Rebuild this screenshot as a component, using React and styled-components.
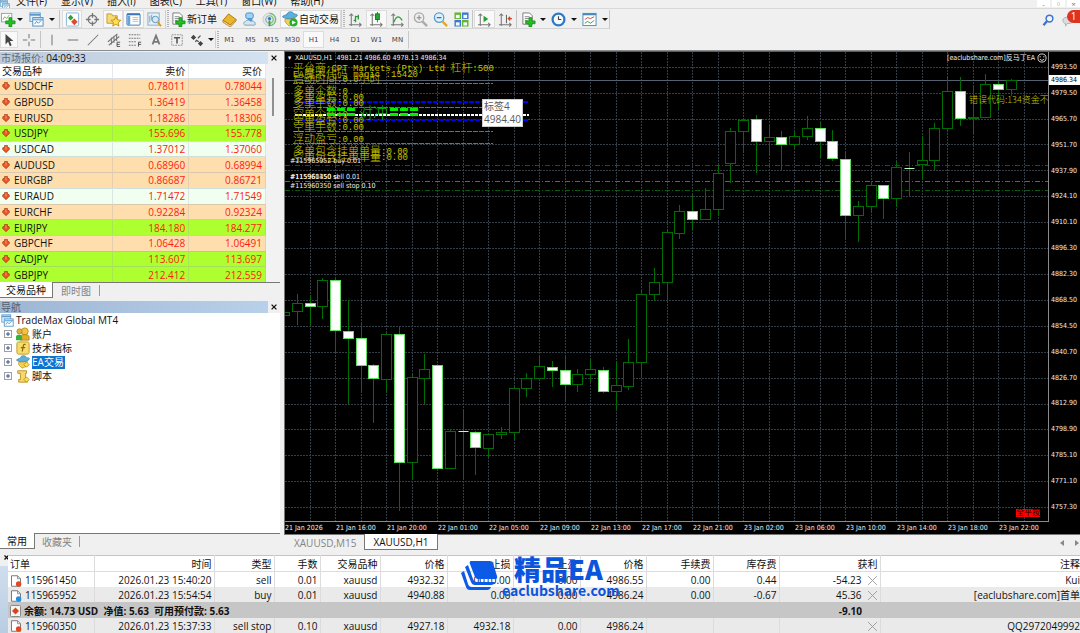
import React from 'react'
import styled, { createGlobalStyle } from 'styled-components'

const GlobalStyle = createGlobalStyle`
  *{
    box-sizing: border-box;
  }
  body{
    margin: 0;
    background: #f0f0f0;
    color: #111;
    font-family: 'Open Sans', 'Noto Sans CJK SC', sans-serif;
    font-size: 10px;
    line-height: 14px;
  }
  button{
    font: inherit;
    color: inherit;
    border: 0;
    padding: 0;
    margin: 0;
    background: none;
  }
  svg{
    display: block;
  }
`

const chartFont = `'DejaVu Sans Condensed', 'DejaVu Sans', 'Noto Sans CJK SC', sans-serif`

const Page = styled.div`
  display: flex;
  flex-direction: column;
  height: 100vh;
  overflow: hidden;
`

const MenuBar = styled.nav`
  display: flex;
  align-items: flex-end;
  gap: 14px;
  height: 9px;
  flex: none;
  overflow: hidden;
  border-bottom: 1px solid #d9d9d9;
  white-space: nowrap;
`

const MenuIcon = styled.div`
  width: 11px;
  height: 8px;
  margin-right: -9px;
  overflow: hidden;
`

const WindowButtons = styled.div`
  display: flex;
  gap: 2px;
  margin-left: auto;
  margin-bottom: 1px;
`

const WindowButton = styled.button`
  width: 13px;
  height: 7px;
  background: #fff;
  color: #777;
  font-size: 8px;
  line-height: 3px;
`

const ToolBar = styled.div`
  display: flex;
  flex: none;
  height: ${props => props.$h}px;
  padding: 1px 0;
`

const ToolGroup = styled.div`
  display: flex;
  border-right: 1px solid #c8c8c8;
  border-bottom: 1px solid ${props => props.$line ? '#d4d4d4' : 'transparent'};
`

const Tool = styled.button`
  display: flex;
  align-items: center;
  justify-content: center;
  gap: 1px;
  flex: none;
  width: ${props => props.$w || 21}px;
  white-space: nowrap;
  background: ${props => props.$on ? '#f9f9f9' : 'none'};
  box-shadow: ${props => props.$on ? 'inset 0 0 0 1px #dcdcdc' : 'none'};
`

const Period = styled(Tool)`
  font-family: 'DejaVu Sans', sans-serif;
  font-size: 7px;
  color: #444;
`

const Sep = styled.div`
  flex: none;
  width: ${props => props.$w || 3}px;
  background: linear-gradient(#c4c4c4, #c4c4c4) center / 1px 100% no-repeat;
`

const Grip = styled.div`
  flex: none;
  width: 4px;
  border-left: 1px solid #d0d0d0;
  background: repeating-linear-gradient(#b4b4b4 0 1px, #f0f0f0 1px 2px) center / 2px 100% no-repeat;
`

const Caret = styled.span`
  border: 3px solid transparent;
  border-top-color: #111;
  border-bottom: 0;
`

const ToolRight = styled.div`
  display: flex;
  align-items: center;
  gap: 8px;
  margin-left: auto;
`

const Badge = styled.span`
  position: absolute;
  top: -3px;
  right: 0;
  width: 13px;
  height: 13px;
  border-radius: 7px 0 0 7px;
  background: #de3320;
  color: #fff;
  line-height: 13px;
  text-align: center;
`

const Notice = styled.button`
  position: relative;
  width: 18px;
  height: 14px;
`

const Main = styled.div`
  display: flex;
  flex: 1;
  min-height: 0;
  border-top: 1px solid #8c8c8c;
`

const Side = styled.aside`
  display: flex;
  flex-direction: column;
  flex: none;
  width: 284px;
  padding: 1px 4px 0 0;
`

const Title = styled.header`
  display: flex;
  flex: none;
  height: 12px;
  line-height: 12px;
  color: ${props => props.$dim ? '#53606e' : '#111'};
  span{
    flex: 1;
    padding-left: 1px;
    background: ${props => props.$dim
      ? 'linear-gradient(90deg, #9db6d3, #b9d0ea)'
      : 'linear-gradient(90deg, #bdcbdc, #d3e1f0)'};
  }
  b{
    font-weight: 400;
    color: #5d6b7a;
  }
`

const Close = styled.button`
  display: flex;
  align-items: center;
  justify-content: center;
  width: 12px;
`

const QuoteBox = styled.div`
  display: flex;
  background: #fff;
`

const Quotes = styled.table`
  flex: 1;
  height: 218px;
  border-collapse: collapse;
  table-layout: fixed;
  line-height: 14px;
  th, td{
    padding: 0 3px 0 0;
    font-weight: 400;
    text-align: right;
    border-right: 1px solid rgba(150, 160, 180, 0.25);
  }
  th:first-child, td:first-child{
    text-align: left;
    padding-left: 2px;
  }
  td{
    color: #ff1a10;
    border-top: 1px solid rgba(150, 160, 180, 0.35);
  }
  td:first-child{
    color: #111;
  }
`

const tones = { sand: '#ffdead', lime: '#adff2f', mint: '#f0fff0' }

const QuoteRow = styled.tr`
  background: ${props => tones[props.$tone]};
`

const Symbol = styled.span`
  display: flex;
  align-items: center;
  gap: 4px;
`

const ScrollTrack = styled.div`
  width: 14px;
  padding: 14px 0 0 6px;
  background: #f2f2f2;
`

const ScrollThumb = styled.div`
  width: 2px;
  height: 38px;
  background: #909090;
`

const Tabs = styled.div`
  display: flex;
  flex: none;
  height: ${props => props.$h}px;
  border-top: 1px solid #777;
  padding-left: ${props => props.$inset || 0}px;
`

const Tab = styled.button`
  height: 16px;
  padding: 0 ${props => props.$pad || 8}px;
  line-height: 14px;
  color: ${props => props.$on ? '#111' : '#848484'};
  background: ${props => props.$on ? '#fff' : 'none'};
  border: solid #777;
  border-width: ${props => props.$on ? '0 1px 1px 0' : '0'};
  margin-top: ${props => props.$on ? '-1px' : '0'};
  border-left-width: ${props => props.$on && props.$boxed ? '1px' : '0'};
`

const TabSep = styled.div`
  width: 1px;
  height: 11px;
  margin-top: 2px;
  background: #999;
`

const TabArrows = styled.div`
  display: flex;
  gap: 11px;
  align-items: center;
  margin-left: auto;
  padding-right: 1px;
`

const Tree = styled.ul`
  display: grid;
  grid-template-rows: repeat(5, 1fr);
  height: 69px;
  margin: 0;
  padding: 1px 0 0;
  list-style: none;
`

const TreeBox = styled.div`
  flex: 1;
  background: #fff;
`

const Leaf = styled.li`
  display: flex;
  align-items: center;
  gap: 2px;
  padding-left: ${props => props.$root ? 1 : 4}px;
`

const Expand = styled.button`
  display: flex;
  width: 8px;
  margin-right: 2px;
`

const LeafName = styled.span`
  line-height: 13px;
  padding-right: 1px;
  color: ${props => props.$on ? '#fff' : '#111'};
  background: ${props => props.$on ? '#0c74d0' : 'none'};
`

const ChartColumn = styled.section`
  display: flex;
  flex-direction: column;
  flex: 1;
  min-width: 0;
`

const ChartFrame = styled.div`
  display: grid;
  grid-template: minmax(0, 1fr) 12px / minmax(0, 1fr) 31px;
  flex: 1;
  min-height: 0;
  overflow: hidden;
  border-top: 1px solid #5c5c5c;
  border-left: 1px solid #777;
  background: #000;
  color: #f0f0f0;
  font-family: ${chartFont};
  font-size: 7px;
  line-height: 10px;
`

const Plot = styled.div`
  position: relative;
  overflow: hidden;
  border: solid #8a8a8a;
  border-width: 0 1px 1px 0;
  svg.plot{
    width: 100%;
    height: 100%;
  }
`

const PriceAxis = styled.div`
  position: relative;
  display: flex;
  flex-direction: column;
  justify-content: space-between;
  padding: 10px 0 10px 2px;
`

const PriceNow = styled.div`
  position: absolute;
  top: 23px;
  left: 0;
  right: 0;
  padding-left: 2px;
  background: #fff;
  color: #000;
`

const TimeAxis = styled.div`
  display: flex;
  grid-column: 1 / 3;
  white-space: nowrap;
  line-height: 12px;
  span{
    flex: 0 0 51px;
  }
`

// text an expert advisor writes straight onto the chart
const Note = styled.div`
  position: absolute;
  left: ${props => props.$x}px;
  top: ${props => props.$y - 7}px;
  white-space: pre;
  line-height: 14px;
  font-size: ${props => props.$size || 11}px;
  font-family: 'Noto Sans CJK SC', sans-serif;
  font-weight: 300;
  color: ${props => props.$color || '#c4c400'};
  i{
    font: 9px/12px 'Liberation Mono', monospace;
    vertical-align: 1px;
  }
`

const ChartLabel = styled.div`
  position: absolute;
  left: ${props => props.$x}px;
  top: ${props => props.$y - 5}px;
  white-space: pre;
`

const ChartName = styled.div`
  position: absolute;
  top: 0;
  right: 1px;
  display: flex;
  align-items: center;
  gap: 2px;
  line-height: 12px;
`

const Tip = styled.div`
  position: absolute;
  left: 197px;
  top: 47px;
  padding: 0 1px;
  border: 1px solid #ccc;
  background: #fff;
  color: #5a5a5a;
  font-family: 'Open Sans', 'Noto Sans CJK SC', sans-serif;
  font-size: 10px;
  line-height: 13px;
`

const CloseAll = styled.button`
  position: absolute;
  right: 8px;
  bottom: 4px;
  width: 24px;
  height: 8px;
  overflow: hidden;
  background: #f00;
  color: #200;
  font-size: 8px;
  line-height: 8px;
  white-space: nowrap;
`

const Terminal = styled.section`
  position: relative;
  display: flex;
  flex: none;
  height: 82px;
  padding-top: 4px;
`

const Gutter = styled.div`
  flex: none;
  width: 8px;
  background: linear-gradient(#f0f0f0 11px, #cfdeee 11px, #b9cde2);
`

const Orders = styled.table`
  flex: 1;
  width: calc(100% - 8px);
  height: 78px;
  table-layout: fixed;
  border-collapse: collapse;
  border-top: 1px solid #c4c4c4;
  background: #fff;
  line-height: 13px;
  white-space: nowrap;
  th, td{
    padding: 2px 2px 0 0;
    font-weight: 400;
    text-align: right;
    border-right: 1px solid #dcdcdc;
  }
  th:first-child, td:first-child{
    text-align: left;
    padding-left: 2px;
  }
  th:last-child, td:last-child{
    padding-right: 0;
    border-right: 0;
  }
  thead tr{
    border-bottom: 1px solid #dcdcdc;
  }
`

const OrderRow = styled.tr`
  background: ${props => props.$shade ? '#eaeaea' : '#fff'};
`

const BalanceRow = styled.tr`
  background: #c6c6c6;
  && td{
    border: 0;
    font-weight: 700;
  }
  && td:nth-child(2){
    padding-right: 18px;
  }
`

const Cell = styled.span`
  display: flex;
  align-items: center;
  justify-content: ${props => props.$end ? 'flex-end' : 'flex-start'};
  gap: ${props => props.$end ? 5 : 3}px;
`

const Watermark = styled.div`
  position: absolute;
  left: 461px;
  top: 4px;
  display: flex;
  align-items: center;
  color: #0b55dd;
  font-family: 'Noto Sans CJK SC', sans-serif;
  font-weight: 700;
  div{
    margin-left: 4px;
  }
  strong{
    display: block;
    margin-left: 12px;
    font-size: 27px;
    line-height: 28px;
  }
  em{
    display: block;
    font-style: normal;
    font-size: 14px;
    line-height: 14px;
  }
`

const Icon = ({ size = 15, children }) => (
  <svg width={size} height={size} viewBox='0 0 16 16' fill='none' aria-hidden='true'>{children}</svg>
)

const PlusMark = () => <path d='M8.5 6h3v3.5H15v3h-3.500V16h-3v-3.500H5v-3h3.500z' fill='#1fc01f' stroke='#0b8a12' strokeWidth='.8' />

const NewChartIcon = () => (
  <Icon>
    <rect x='.5' y='1.500' width='11' height='9' fill='#fff' stroke='#86a4ba' />
    <path d='M2 8l2-3 2 2 3-4' stroke='#7faa6a' />
    <PlusMark />
  </Icon>
)

const WindowsIcon = ({ size }) => (
  <Icon size={size}>
    <rect x='1' y='1' width='11' height='9' fill='#e6f3fc' stroke='#5f9bc9' />
    <path d='M1 3h11' stroke='#5f9bc9' strokeWidth='2' />
    <rect x='4' y='6' width='11' height='9' fill='#fff' stroke='#4b8cc0' />
    <path d='M4 8h11' stroke='#6fb2e0' strokeWidth='2' />
    <path d='M6 13l2-3 2 2 3-3' stroke='#4b8cc0' />
  </Icon>
)

const MarketIcon = () => (
  <Icon>
    <rect x='1.500' y='1' width='13' height='14' rx='1' fill='#fff' stroke='#8bb3d8' />
    <path d='M6 3l3 3-3 3-3-3z' fill='#2fa33a' />
    <path d='M10 7l3.500 3.500L10 14l-3.500-3.500z' fill='#e04a2c' />
  </Icon>
)

const TargetIcon = () => (
  <Icon>
    <circle cx='8' cy='8' r='4.500' stroke='#777' strokeWidth='1.400' />
    <path d='M8 1v5M8 10v5M1 8h5M10 8h5' stroke='#777' strokeWidth='1.400' />
  </Icon>
)

const FolderStarIcon = () => (
  <Icon>
    <path d='M1 2h5l1 2h5v8H1z' fill='#f7d978' stroke='#c79a2c' />
    <path d='M10.500 5l1.600 3.400 3.700.4-2.700 2.500.7 3.700-3.300-1.900L7.200 15l.7-3.700-2.700-2.500 3.700-.4z' fill='#ffe04d' stroke='#c58e15' />
  </Icon>
)

const DataIcon = () => (
  <Icon>
    <rect x='1' y='2' width='14' height='12' rx='1' fill='#fff' stroke='#3c78b8' />
    <path d='M1 2.500h14' stroke='#3c78b8' strokeWidth='2' />
    <path d='M3 4v10' stroke='#69a4d9' strokeWidth='3' />
    <path d='M7 6h6M7 8h6M7 10h6' stroke='#d9b98a' />
  </Icon>
)

const TesterIcon = () => (
  <Icon>
    <rect x='1' y='1' width='12' height='13' fill='#e8f1f8' stroke='#88a9c4' />
    <path d='M3 4v7M5 3v6M7 5v6' stroke='#71a0c4' />
    <circle cx='9' cy='8' r='3.500' fill='#d4e8f5' stroke='#6695b9' />
    <path d='M11.500 11l3.500 4' stroke='#d69b25' strokeWidth='2' />
  </Icon>
)

const OrderIcon = () => (
  <Icon>
    <path d='M2 1h7l3 3v9H2z' fill='#fff' stroke='#777' />
    <path d='M4 5h5M4 7h5M4 9h3' stroke='#888' />
    <PlusMark />
  </Icon>
)

const BookIcon = () => (
  <Icon>
    <path d='M1 9l6-7 8 6-6 6z' fill='#eab62b' stroke='#a97411' />
    <path d='M1 9l8 5 6-6v1.500L9 16l-8-5z' fill='#fbe7a2' stroke='#a97411' strokeWidth='.8' />
  </Icon>
)

const CommunityIcon = () => (
  <Icon>
    <rect x='4' y='1' width='8' height='6' rx='2' fill='#9ed3f5' stroke='#3d8fc9' />
    <path d='M6 7v3h5V7' fill='#4a9ad4' />
    <path d='M3 14c-2-1-1-4 1-4 1-2 4-2 5 0 2-1 5 0 5 2 1 1 0 2-1 2z' fill='#d5e6f2' stroke='#7b9fb9' />
  </Icon>
)

const SignalIcon = () => (
  <Icon>
    <circle cx='8' cy='8' r='7' fill='#e3e8e4' stroke='#b9c6c2' strokeWidth='.8' />
    <path d='M8 4a4 4 0 010 8M8 1.500a6.500 6.500 0 010 13' stroke='#6cbd76' strokeWidth='1.300' />
    <path d='M8 4a4 4 0 000 8' stroke='#8fabd0' strokeWidth='1.300' />
    <circle cx='8' cy='7' r='1.800' fill='#3577bb' />
    <path d='M8 9v6' stroke='#3f9c4a' strokeWidth='2' />
  </Icon>
)

const RobotIcon = ({ play, size = 16 }) => (
  <Icon size={size}>
    <path d='M3 8l10-1-1 6-5 2-4-4z' fill='#f3cf54' stroke='#ba8d1c' strokeWidth='.7' />
    <path d='M.5 6C2 3 5 5 5 3c1-3 6-3 7 0 3 0 4 1 3 2-3 3-9 4-14.500 1z' fill='#5eb0dc' stroke='#2d7ba8' strokeWidth='.7' />
    {play
      ? <><circle cx='11.500' cy='11.500' r='4' fill='#22b02c' /><path d='M10 9.500l4 2-4 2z' fill='#fff' /></>
      : <path d='M12 8l3 3-3 3-3-3z' fill='#ffe052' stroke='#b98c14' />}
  </Icon>
)

const Axes = ({ children }) => (
  <Icon>
    <path d='M3.500 15V2M1.500 4l2-2 2 2M1 13.500h13M12 11.500l2 2-2 2' stroke='#777' strokeWidth='1.100' />
    {children}
  </Icon>
)

const LensIcon = ({ plus, gray }) => (
  <Icon>
    <circle cx='6.500' cy='6' r='5' fill={gray ? '#eee' : '#dff1fc'} stroke={gray ? '#aaa' : '#57a0cf'} strokeWidth='1.400' />
    <path d={plus ? 'M4 6h5M6.500 3.500v5' : 'M4 6h5'} stroke={gray ? '#999' : '#2c79b4'} strokeWidth='1.400' />
    <path d='M10 10l5 5' stroke={gray ? '#aaa' : '#e0a92b'} strokeWidth='2.500' />
  </Icon>
)

const TileIcon = () => (
  <Icon>
    {[[0, 0, '#67b32e'], [8, 0, '#3c78d0'], [0, 8, '#3c78d0'], [8, 8, '#67b32e']].map(([x, y, c]) => (
      <g key={x + '-' + y}>
        <rect x={x + 0.5} y={y + 0.5} width='7' height='7' fill={c} />
        <rect x={x + 2} y={y + 3} width='4' height='3.500' fill='#f4f8ff' />
      </g>
    ))}
  </Icon>
)

const ClockIcon = () => (
  <Icon>
    <circle cx='8' cy='8' r='6.300' fill='#f5faff' stroke='#2f78c4' strokeWidth='2.400' />
    <path d='M8 4.500V8h3' stroke='#444' strokeWidth='1.200' />
  </Icon>
)

const TemplateIcon = () => (
  <Icon>
    <rect x='1' y='1.500' width='14' height='13' fill='#fff' stroke='#4889bf' />
    <path d='M1 2.500h14' stroke='#4889bf' strokeWidth='2' />
    <path d='M3 8l3-2 3 1 4-2' stroke='#cc4a35' />
    <path d='M3 12l3-2 3 2 4-3' stroke='#35a047' />
  </Icon>
)

const Line = ({ d, w = 1.2, children }) => (
  <Icon size={14}><path d={d} stroke='#777' strokeWidth={w} />{children}</Icon>
)

const Drop = () => <Tool $w={8} aria-label='more'><Caret /></Tool>

const ArrowIcon = () => (
  <svg width='8' height='8' viewBox='0 0 8 8' aria-hidden='true'>
    <path d='M4 7.700L.4 4.300 1 2.500h1.500v-2h3v2H7l.6 1.800z' fill='#ea5526' stroke='#9c300f' strokeWidth='.6' />
    <path d='M3.500 1.500h1v3h-1z' fill='#ff9a70' />
  </svg>
)

const DocIcon = ({ dot }) => (
  <Icon size={12}>
    <path d='M2 1h8l4 4v10H2z' fill='#fff' stroke='#777' strokeWidth='1.300' />
    <path d='M10 1v4h4' stroke='#777' />
    <circle cx='11.500' cy='12' r='3.600' fill={dot} />
  </Icon>
)

const CrossIcon = ({ size = 6, color = '#111', width = 1.3 }) => (
  <svg width={size} height={size} viewBox='0 0 10 10' aria-hidden='true'>
    <path d='M1 1l8 8M9 1L1 9' stroke={color} strokeWidth={width * 10 / size} />
  </svg>
)

const menus = ['文件(F)', '显示(V)', '插入(I)', '图表(C)', '工具(T)', '窗口(W)', '帮助(H)']
const periods = ['M1', 'M5', 'M15', 'M30', 'H1', 'H4', 'D1', 'W1', 'MN']

const quotes = [
  ['USDCHF', '0.78011', '0.78044', 'sand'],
  ['GBPUSD', '1.36419', '1.36458', 'sand'],
  ['EURUSD', '1.18286', '1.18306', 'sand'],
  ['USDJPY', '155.696', '155.778', 'lime'],
  ['USDCAD', '1.37012', '1.37060', 'mint'],
  ['AUDUSD', '0.68960', '0.68994', 'sand'],
  ['EURGBP', '0.86687', '0.86721', 'sand'],
  ['EURAUD', '1.71472', '1.71549', 'mint'],
  ['EURCHF', '0.92284', '0.92324', 'sand'],
  ['EURJPY', '184.180', '184.277', 'lime'],
  ['GBPCHF', '1.06428', '1.06491', 'sand'],
  ['CADJPY', '113.607', '113.697', 'lime'],
  ['GBPJPY', '212.412', '212.559', 'lime']
]

const prices = ['4993.50', '4979.50', '4965.70', '4951.70', '4937.90', '4924.10', '4910.10', '4896.30', '4882.30',
  '4868.50', '4854.50', '4840.70', '4826.70', '4812.90', '4798.90', '4785.10', '4771.10', '4757.30']

const times = ['21 Jan 2026', '21 Jan 16:00', '21 Jan 20:00', '22 Jan 01:00', '22 Jan 05:00', '22 Jan 09:00',
  '22 Jan 13:00', '22 Jan 17:00', '22 Jan 21:00', '23 Jan 02:00', '23 Jan 06:00', '23 Jan 10:00',
  '23 Jan 14:00', '23 Jan 18:00', '23 Jan 22:00']

const rows = [67, 93, 119, 144, 170, 196, 222, 248, 274, 300, 326, 352, 378, 404, 429, 455, 481, 507]

// high, body top, body bottom, low, falling
const candles = [
  [303, 312, 315, 317, 0], [294, 303, 311, 325, 0], [295, 303, 306, 325, 1], [278, 280, 306, 319, 0],
  [277, 280, 330, 353, 1], [300, 331, 338, 404, 1], [324, 338, 365, 391, 1], [364, 365, 378, 423, 1],
  [333, 334, 379, 391, 0], [327, 334, 462, 511, 1], [375, 377, 462, 480, 0], [354, 369, 378, 404, 0],
  [364, 365, 468, 469, 1], [430, 431, 468, 469, 0], [410, 431, 431, 480, 1], [431, 432, 447, 475, 1],
  [433, 434, 448, 457, 0], [427, 432, 434, 439, 0], [387, 388, 432, 440, 0], [373, 378, 388, 397, 0],
  [356, 366, 378, 379, 0], [361, 367, 370, 387, 1], [357, 370, 384, 401, 1], [369, 374, 384, 392, 0],
  [360, 369, 374, 382, 0], [367, 370, 391, 393, 1], [362, 385, 391, 409, 0], [339, 362, 386, 390, 0],
  [290, 294, 362, 378, 0], [268, 282, 294, 301, 0], [229, 232, 282, 298, 0], [205, 211, 233, 239, 0],
  [195, 211, 219, 230, 1], [188, 209, 219, 220, 0], [165, 173, 209, 215, 0], [128, 131, 163, 183, 0],
  [119, 120, 131, 153, 0], [115, 119, 141, 173, 1], [125, 137, 141, 154, 0], [131, 137, 144, 170, 1],
  [132, 136, 144, 148, 0], [116, 128, 136, 140, 0], [123, 128, 141, 157, 1], [130, 141, 158, 161, 1],
  [152, 159, 215, 239, 1], [201, 206, 215, 242, 0], [181, 185, 206, 213, 0], [185, 185, 198, 219, 1],
  [162, 167, 198, 207, 0], [152, 168, 168, 197, 1], [136, 160, 164, 180, 0], [123, 128, 160, 170, 0],
  [77, 91, 128, 131, 0], [77, 91, 118, 126, 1], [85, 117, 118, 133, 0], [74, 84, 117, 118, 0],
  [81, 84, 89, 110, 1], [79, 80, 89, 96, 0]
]

const notes = [
  [67, '平台商:CPT Markets (Ptx) Ltd 杠杆:500'],
  [73, 'EA魔术代码 magic :15420'],
  [78, '启动时间:0.0小时'],
  [90, '多单个数:0'],
  [96, '多单盈亏:0.00'],
  [102, '多单手数:0.00'],
  [113, '空单个数:0'],
  [119, '空单盈亏:0.00'],
  [126, '空单手数:0.00'],
  [138, '浮动盈亏:0.00'],
  [150, '多单包含挂单单量:0.00'],
  [156, '空单包含挂单单量:0.00']
]

const columns = [['订单', 86], ['时间', 120], ['类型', 60], ['手数', 46], ['交易品种', 60], ['价格', 67], ['止损', 66],
  ['止盈', 67], ['价格', 66], ['手续费', 67], ['库存费', 66], ['获利', 101], ['注释']]

const orders = [
  ['115961450', '2026.01.23 15:40:20', 'sell', '0.01', 'xauusd', '4932.32', '0010.00', '0.00', '4986.55', '0.00', '0.44', '-54.23', 'Kui'],
  ['115965952', '2026.01.23 15:54:54', 'buy', '0.01', 'xauusd', '4940.88', '0.00', '0.00', '4986.24', '0.00', '-0.67', '45.36', '[eaclubshare.com]首单'],
  ['115960350', '2026.01.23 15:37:33', 'sell stop', '0.10', 'xauusd', '4927.18', '4932.18', '0.00', '4986.24', '', '', '', 'QQ2972049992']
]

// latin runs go narrower than the full-width characters around them
const mixed = text => text.split(/([ -~]+)/).map((part, i) => i % 2 ? <i key={i}>{part}</i> : part)

const Candle = ({ index, data }) => {
  const [high, top, bottom, low, falling] = data
  const c = Math.floor(284.5 + 12.75 * index) + 0.5
  return (
    <g>
      <path d={`M${c} ${high}V${top}M${c} ${bottom}V${low}`} stroke='#006e00' />
      {top === bottom
        ? <path d={`M${c - 5} ${top + 0.5}h10`} stroke='#b8ffb8' />
        : <rect
            x={c - 5} y={top + 0.5} width='10' height={bottom - top}
            fill={falling ? '#fff' : '#000'} stroke={falling ? '#5fe05f' : '#006e00'}
          />}
    </g>
  )
}

const PlotDrawing = () => (
  <svg className='plot' viewBox='285 52 763 469' preserveAspectRatio='none' fill='none'>
    <g stroke='#353e47' strokeDasharray='2 1'>
      {Array.from({ length: 29 }, (_, i) => Math.floor(310 + 25.5 * i)).map(x => (
        <path key={x} d={`M${x + 0.5} 52V521`} />
      ))}
      {rows.map(y => <path key={y} d={`M285 ${y + 0.5}H1048`} />)}
    </g>
    <path d='M285 80.500H1048' stroke='#566270' />
    <path d='M285 165.500H1048M285 190.500H1048' stroke='#0d5c0d' strokeDasharray='5 2 1 2' />
    <path d='M285 181.500H1048' stroke='#8a5a1c' strokeDasharray='5 2 1 2' />
    {candles.map((data, i) => <Candle key={i} index={i} data={data} />)}
    <path d='M293 83.500H493M293 107.500H493M293 131.500H493M293 143.500H493' stroke='#7c7c00' strokeDasharray='5 1' />
    <path d='M295 102H529M295 120H529' stroke='#0000ff' strokeWidth='2' strokeDasharray='5 1' />
    <path d='M295 115H529' stroke='#fff' strokeWidth='2' strokeDasharray='3 1' />
  </svg>
)

const MainTools = () => (
  <ToolBar $h={21}>
    <ToolGroup $line>
      <Tool $w={16}><NewChartIcon /></Tool>
      <Drop />
      <Tool $w={24}><WindowsIcon /></Tool>
      <Drop />
      <Sep $w={6} />
      <Tool $w={20} $on><MarketIcon /></Tool>
      <Tool><TargetIcon /></Tool>
      <Tool $w={20} $on><FolderStarIcon /></Tool>
      <Tool $on><DataIcon /></Tool>
      <Tool><TesterIcon /></Tool>
      <Grip />
      <Tool $w={50}><OrderIcon />新订单</Tool>
      <Tool $w={20}><BookIcon /></Tool>
      <Tool $w={20}><CommunityIcon /></Tool>
      <Tool><SignalIcon /></Tool>
      <Tool $w={61} $on><RobotIcon play />自动交易</Tool>
      <Grip />
      <Tool><Axes><path d='M8 11V4M8 9H6M8 5h3M11 3v5' stroke='#2c9b3b' strokeWidth='1.400' /></Axes></Tool>
      <Tool $on><Axes><path d='M9 0v11' stroke='#1f8a2b' /><rect x='7' y='2' width='4' height='6' fill='#1fae33' stroke='#12711e' /></Axes></Tool>
      <Tool $w={20}><Axes><path d='M4 11c3-8 6-7 9-2' stroke='#2c9b3b' strokeWidth='1.300' /></Axes></Tool>
      <Sep />
      <Tool $w={20}><LensIcon plus gray /></Tool>
      <Tool><LensIcon /></Tool>
      <Tool $w={20}><TileIcon /></Tool>
      <Sep />
      <Tool $on><Axes><path d='M7 4l5 3.500L7 11z' fill='#1fa32c' /></Axes></Tool>
      <Tool $w={20}><Axes><path d='M9 3v9' stroke='#555' /><path d='M15 7h-4M13 5l-2 2 2 2' stroke='#cf4a20' strokeWidth='1.400' /></Axes></Tool>
      <Sep />
      <Tool><OrderIcon /></Tool>
      <Drop />
      <Tool $w={23}><ClockIcon /></Tool>
      <Drop />
      <Tool $w={23}><TemplateIcon /></Tool>
      <Drop />
    </ToolGroup>
    <ToolRight>
      <Tool $w={12} aria-label='search'>
        <Icon size={12}>
          <circle cx='10' cy='6' r='4.500' fill='#eef4ff' stroke='#3f72cf' strokeWidth='2' />
          <path d='M7 9l-5 6' stroke='#3f72cf' strokeWidth='3' />
        </Icon>
      </Tool>
      <Notice aria-label='messages'>
        <Icon size={14}><path d='M1 8c0-4 12-5 12 0 0 4-5 4-7 4l-2 3v-3c-2 0-3-2-3-4z' fill='#dcdcdc' stroke='#aaa' /></Icon>
        <Badge>1</Badge>
      </Notice>
    </ToolRight>
  </ToolBar>
)

const DrawTools = () => (
  <ToolBar $h={20}>
    <ToolGroup>
      <Tool $w={18} $on>
        <Icon size={14}><path d='M4 1v12l3-3 2 5 2-1-2-5h4z' fill='#444' /></Icon>
      </Tool>
      <Tool><Line d='M8 1v5M8 10v5M1 8h5M10 8h5' /></Tool>
      <Sep />
      <Tool $w={20}><Line d='M8 2v12' /></Tool>
      <Tool><Line d='M2 8h12' /></Tool>
      <Tool $w={20}><Line d='M2 14L14 2' /></Tool>
      <Tool>
        <Line d='M1 10L12 1M2 14L14 4M5 5v8M8 3v8M11 1v8'><path d='M15 10.500h-3.500v5H15M11.500 13h3' stroke='#444' /></Line>
      </Tool>
      <Tool>
        <Icon size={14}>
          <path d='M1 2h13M1 6h13M1 10h9M1 14h9' stroke='#666' strokeDasharray='2 1' />
          <path d='M15 10.500h-3v5M12 13h3' stroke='#444' />
        </Icon>
      </Tool>
      <Tool><Line w={2} d='M4 13L8 3l4 10M5.500 10h5' /></Tool>
      <Tool>
        <Icon size={14}>
          <rect x='2' y='2' width='12' height='12' stroke='#888' strokeDasharray='2 1' />
          <path d='M4.500 5.500h7M8 5v7' stroke='#555' strokeWidth='1.800' />
        </Icon>
      </Tool>
      <Tool $w={20}>
        <Icon size={14}><path d='M4 2l3 3-3 3-3-3zM12 9l3 3-3 3-3-3z' fill='#444' /><path d='M6 10l2-2M9 6l3-3M7 8l3 2' stroke='#555' strokeWidth='1.500' /></Icon>
      </Tool>
      <Drop />
      <Grip />
      {periods.map(name => <Period key={name} $on={name === 'H1'}>{name}</Period>)}
    </ToolGroup>
  </ToolBar>
)

const MarketWatch = () => (
  <>
    <Title>
      <span><b>市场报价:</b> 04:09:33</span>
      <Close aria-label='close'><CrossIcon /></Close>
    </Title>
    <QuoteBox>
      <Quotes>
        <colgroup><col width='113' /><col width='76' /><col width='77' /></colgroup>
        <thead><tr><th>交易品种</th><th>卖价</th><th>买价</th></tr></thead>
        <tbody>
          {quotes.map(([name, bid, ask, tone]) => (
            <QuoteRow key={name} $tone={tone}>
              <td><Symbol><ArrowIcon />{name}</Symbol></td>
              <td>{bid}</td>
              <td>{ask}</td>
            </QuoteRow>
          ))}
        </tbody>
      </Quotes>
      <ScrollTrack><ScrollThumb /></ScrollTrack>
    </QuoteBox>
    <Tabs $h={19}>
      <Tab $on $pad={6}>交易品种</Tab>
      <Tab>即时图</Tab>
      <TabSep />
    </Tabs>
  </>
)

const branches = [
  ['账户', (
    <Icon size={14} key='a'>
      <circle cx='10' cy='5' r='4' fill='#f2c33c' stroke='#a87b10' strokeWidth='.8' />
      <path d='M5 15V11c0-3 10-3 10 0v4z' fill='#e5af25' stroke='#a87b10' strokeWidth='.8' />
      <circle cx='4' cy='5' r='3' fill='#d9b33d' stroke='#a87b10' strokeWidth='.8' />
      <path d='M0 15v-4c0-3 7-3 7 0v4z' fill='#37b13e' />
    </Icon>
  )],
  ['技术指标', (
    <Icon size={14} key='b'>
      <rect x='1' y='1' width='14' height='14' rx='2' fill='#f7dc6a' stroke='#bd9526' />
      <path d='M11 4c-4-1-2 3-4 8M5.500 7.500h5' stroke='#8a6410' strokeWidth='1.300' />
    </Icon>
  )],
  ['EA交易', <RobotIcon size={14} key='c' />],
  ['脚本', (
    <Icon size={14} key='d'>
      <path d='M2 2h10v3h-1v7h2v3H3v-3h2V5H2z' fill='#f6d866' stroke='#b68f22' />
      <path d='M12 9l3 3-3 3-3-3z' fill='#ffe052' stroke='#b98c14' />
    </Icon>
  )]
]

const Navigator = () => (
  <>
    <Title $dim>
      <span>导航</span>
      <Close aria-label='close'><CrossIcon /></Close>
    </Title>
    <TreeBox>
      <Tree>
        <Leaf $root><WindowsIcon size={13} /><LeafName>TradeMax Global MT4</LeafName></Leaf>
        {branches.map(([name, icon]) => (
          <Leaf key={name}>
            <Expand aria-label='expand'>
              <svg width='8' height='8' viewBox='0 0 8 8' fill='none'>
                <rect x='.5' y='.5' width='7' height='7' fill='#fff' stroke='#a0a0a0' />
                <path d='M2 4h4M4 2v4' stroke='#33529a' />
              </svg>
            </Expand>
            {icon}
            <LeafName $on={name === 'EA交易'}>{name}</LeafName>
          </Leaf>
        ))}
      </Tree>
    </TreeBox>
    <Tabs $h={18}>
      <Tab $on $pad={7}>常用</Tab>
      <Tab $pad={7}>收藏夹</Tab>
      <TabSep />
    </Tabs>
  </>
)

const Chart = () => (
  <ChartColumn>
    <ChartFrame>
      <Plot>
        <PlotDrawing />
        {notes.map(([y, text]) => <Note key={y} $x={8} $y={y - 52}>{mixed(text)}</Note>)}
        <Note $x={41} $y={60} $size={10} $color='#00f000'>〓〓〓</Note>
        <Note $x={73} $y={60} $size={15} $color='#00c000'>对冲</Note>
        <Note $x={104} $y={60} $size={10} $color='#00f000'>〓〓〓</Note>
        <Note $x={684} $y={48} $size={9}>错误代码:134资金不足</Note>
        <ChartLabel $x={3} $y={6}>▾</ChartLabel>
        <ChartLabel $x={10} $y={6}>XAUUSD,H1  4981.21 4986.60 4978.13 4986.34</ChartLabel>
        <ChartLabel $x={5} $y={109}>#115965952 buy 0.01</ChartLabel>
        <ChartLabel $x={5} $y={125}>#115961450 sell 0.01</ChartLabel>
        <ChartLabel $x={5} $y={125}>#115960350 sl</ChartLabel>
        <ChartLabel $x={5} $y={134}>#115960350 sell stop 0.10</ChartLabel>
        <ChartName>
          [eaclubshare.com]反马丁EA
          <Icon size={10}>
            <circle cx='8' cy='8' r='6.500' stroke='#ddd' strokeWidth='1.500' />
            <path d='M5 5v2M11 5v2M4.500 9.500c2 3 5 3 7 0' stroke='#ddd' strokeWidth='1.500' />
          </Icon>
        </ChartName>
        <Tip>标签4<br />4984.40</Tip>
        <CloseAll>全平按钮</CloseAll>
      </Plot>
      <PriceAxis>
        {prices.map(price => <span key={price}>{price}</span>)}
        <PriceNow>4986.34</PriceNow>
      </PriceAxis>
      <TimeAxis>
        {times.map(time => <span key={time}>{time}</span>)}
      </TimeAxis>
    </ChartFrame>
    <Tabs $h={17} $inset={2}>
      <Tab>XAUUSD,M15</Tab>
      <Tab $on $boxed>XAUUSD,H1</Tab>
      <TabArrows>
        <svg width='4' height='6'><path d='M4 0v6L0 3z' fill='#888' /></svg>
        <svg width='4' height='6'><path d='M0 0v6l4-3z' fill='#888' /></svg>
      </TabArrows>
    </Tabs>
  </ChartColumn>
)

const Order = ({ data, shade }) => (
  <OrderRow $shade={shade}>
    {data.map((value, i) => (
      <td key={i}>
        {i === 0 && <Cell><DocIcon dot={data[2] === 'buy' ? '#1f8fe0' : '#e2481f'} />{value}</Cell>}
        {i === 11 && <Cell $end>{value}<CrossIcon size={11} color='#999' width={0.9} /></Cell>}
        {i !== 0 && i !== 11 && value}
      </td>
    ))}
  </OrderRow>
)

const TerminalPanel = () => (
  <Terminal>
    <Gutter><Close aria-label='close'><CrossIcon size={5} /></Close></Gutter>
    <Orders>
      <colgroup>{columns.map(([, width], i) => <col key={i} width={width} />)}</colgroup>
      <thead><tr>{columns.map(([name], i) => <th key={i}>{name}</th>)}</tr></thead>
      <tbody>
        <Order data={orders[0]} />
        <Order data={orders[1]} shade />
        <BalanceRow>
          <td colSpan='11'>
            <Cell>
              <svg width='11' height='12' viewBox='0 0 11 12' fill='none'>
                <rect x='.5' y='.5' width='10' height='11' rx='1' fill='#f4f4f4' stroke='#888' />
                <path d='M5.500 2.500L9 6 5.500 9.500 2 6z' fill='#d8451d' />
              </svg>
              <span>余额: 14.73 USD&nbsp; 净值: 5.63&nbsp; 可用预付款: 5.63</span>
            </Cell>
          </td>
          <td>-9.10</td>
          <td />
        </BalanceRow>
        <Order data={orders[2]} shade />
      </tbody>
    </Orders>
    <Watermark>
      <svg width='37' height='30' viewBox='0 0 37 30' fill='#0b5be8'>
        <path d='M10 0h19q2 0 3 2l4 13q1 3-2 3H17q-2 0-3-2L9 3q-1-3 1-3z' />
        <path d='M4 6l3-2 5 14q1 3 4 3h18q-1 3-4 3H14q-3 0-4-3z' />
        <path d='M0 12l3-2 4 13q1 3 4 3h19q-1 3-4 3H9q-3 0-4-3z' />
      </svg>
      <div>
        <strong>精品EA</strong>
        <em>eaclubshare.com</em>
      </div>
    </Watermark>
  </Terminal>
)

const App = () => (
  <Page>
    <GlobalStyle />
    <MenuBar>
      <MenuIcon><WindowsIcon size={10} /></MenuIcon>
      {menus.map(name => <button key={name}>{name}</button>)}
      <WindowButtons>
        <WindowButton>-</WindowButton>
        <WindowButton>▫</WindowButton>
        <WindowButton>×</WindowButton>
      </WindowButtons>
    </MenuBar>
    <MainTools />
    <DrawTools />
    <Main>
      <Side>
        <MarketWatch />
        <Navigator />
      </Side>
      <Chart />
    </Main>
    <TerminalPanel />
  </Page>
)

export default App
